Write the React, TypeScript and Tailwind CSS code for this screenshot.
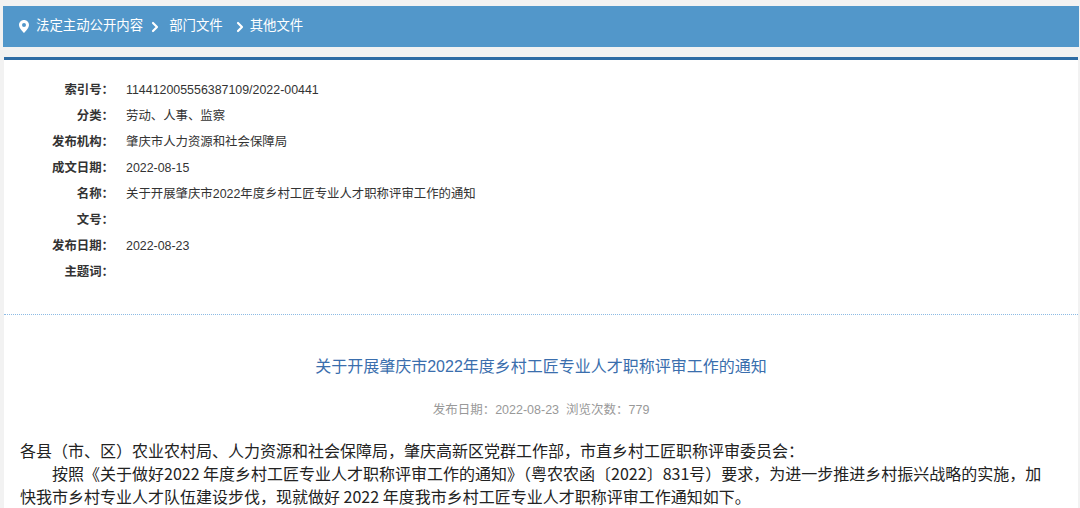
import React from 'react';
import { ChevronRight } from 'lucide-react';

const meta: { label: string; value: string }[] = [
  { label: '索引号', value: '114412005556387109/2022-00441' },
  { label: '分类', value: '劳动、人事、监察' },
  { label: '发布机构', value: '肇庆市人力资源和社会保障局' },
  { label: '成文日期', value: '2022-08-15' },
  { label: '名称', value: '关于开展肇庆市2022年度乡村工匠专业人才职称评审工作的通知' },
  { label: '文号', value: '' },
  { label: '发布日期', value: '2022-08-23' },
  { label: '主题词', value: '' },
];

const crumbs = ['法定主动公开内容', '部门文件', '其他文件'];

const PinIcon = () => (
  <svg width="10" height="13" viewBox="0 0 10 13" className="shrink-0">
    <path
      fillRule="evenodd"
      fill="#fff"
      d="M5 0C2.2 0 0 2.2 0 5c0 3.4 5 8 5 8s5-4.6 5-8C10 2.2 7.8 0 5 0Zm0 7a2 2 0 1 1 0-4 2 2 0 0 1 0 4Z"
    />
  </svg>
);

const App: React.FC = () => {
  return (
    <div
      className="min-h-[508px] bg-[#f2f2f2] pt-[6px] text-[#333]"
      style={{ fontFamily: '"Liberation Sans", "Noto Sans CJK SC", sans-serif' }}
    >
      {/* breadcrumb */}
      <div className="ml-[3px] mr-[1px] flex h-[41px] items-center bg-[#5297ca] pl-[16px] text-[13.4px] text-white">
        <PinIcon />
        <span className="ml-[7px]">{crumbs[0]}</span>
        <ChevronRight size={16} strokeWidth={3.2} className="ml-[4px] mr-[6px]" />
        <span>{crumbs[1]}</span>
        <ChevronRight size={16} strokeWidth={3.2} className="ml-[9px] mr-[2px]" />
        <span>{crumbs[2]}</span>
      </div>

      {/* content panel */}
      <div className="ml-[4px] mr-[2px] mt-[10px] border-t-[3px] border-[#2e6ca4] bg-white">
        <div className="border-b border-dotted border-[#8dbbe4] pb-[29px] pt-[17px] text-[12.4px]">
          {meta.map((row) => (
            <div key={row.label} className="flex h-[26px] items-center">
              <div className="w-[110px] text-right font-bold">{row.label}：</div>
              <div className="ml-[12px]">{row.value}</div>
            </div>
          ))}
        </div>

        <div className="pt-[40px] text-center">
          <h1 className="text-[16px] leading-[24px] text-[#3a6ead]">
            关于开展肇庆市2022年度乡村工匠专业人才职称评审工作的通知
          </h1>
          <p className="mt-[21px] text-[12.5px] leading-[20px] text-[#999]">
            发布日期：2022-08-23&nbsp;&nbsp;浏览次数：779
          </p>
        </div>

        <div
          className="mt-[19px] pl-[16px] pr-[26px] text-[16px] leading-[23px] text-[#222]"
          style={{ fontFamily: '"Noto Sans CJK SC", sans-serif' }}
        >
          <p>各县（市、区）农业农村局、人力资源和社会保障局，肇庆高新区党群工作部，市直乡村工匠职称评审委员会：</p>
          <p className="indent-[2em]">
            按照《关于做好2022 年度乡村工匠专业人才职称评审工作的通知》（粤农农函〔2022〕831号）要求，为进一步推进乡村振兴战略的实施，加快我市乡村专业人才队伍建设步伐，现就做好 2022 年度我市乡村工匠专业人才职称评审工作通知如下。
          </p>
        </div>
      </div>
    </div>
  );
};

export default App;
